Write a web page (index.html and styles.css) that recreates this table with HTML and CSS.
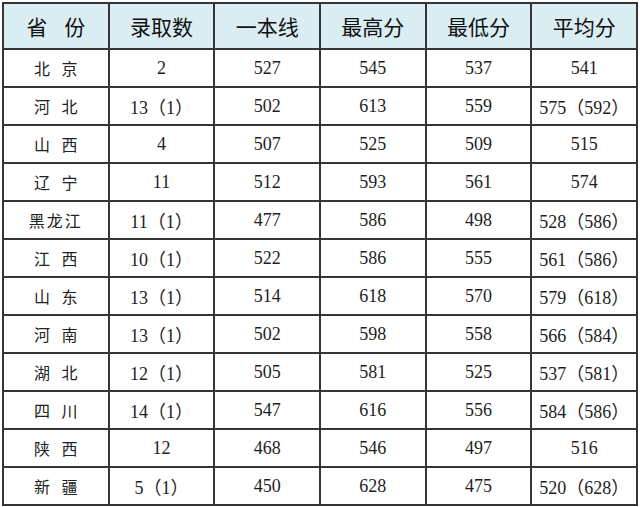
FILE: index.html
```html
<!DOCTYPE html>
<html lang="zh">
<head>
<meta charset="utf-8">
<link rel="stylesheet" href="styles.css">
</head>
<body>
<table class="tbl">
<thead>
<tr><th>省 份</th><th>录取数</th><th>一本线</th><th>最高分</th><th>最低分</th><th>平均分</th></tr>
</thead>
<tbody>
<tr><td class="prov">北 京</td><td>2</td><td>527</td><td>545</td><td>537</td><td>541</td></tr>
<tr><td class="prov">河 北</td><td>13（1）</td><td>502</td><td>613</td><td>559</td><td>575（592）</td></tr>
<tr><td class="prov">山 西</td><td>4</td><td>507</td><td>525</td><td>509</td><td>515</td></tr>
<tr><td class="prov">辽 宁</td><td>11</td><td>512</td><td>593</td><td>561</td><td>574</td></tr>
<tr><td class="prov three">黑龙江</td><td>11（1）</td><td>477</td><td>586</td><td>498</td><td>528（586）</td></tr>
<tr><td class="prov">江 西</td><td>10（1）</td><td>522</td><td>586</td><td>555</td><td>561（586）</td></tr>
<tr><td class="prov">山 东</td><td>13（1）</td><td>514</td><td>618</td><td>570</td><td>579（618）</td></tr>
<tr><td class="prov">河 南</td><td>13（1）</td><td>502</td><td>598</td><td>558</td><td>566（584）</td></tr>
<tr><td class="prov">湖 北</td><td>12（1）</td><td>505</td><td>581</td><td>525</td><td>537（581）</td></tr>
<tr><td class="prov">四 川</td><td>14（1）</td><td>547</td><td>616</td><td>556</td><td>584（586）</td></tr>
<tr><td class="prov">陕 西</td><td>12</td><td>468</td><td>546</td><td>497</td><td>516</td></tr>
<tr><td class="prov">新 疆</td><td>5（1）</td><td>450</td><td>628</td><td>475</td><td>520（628）</td></tr>
</tbody>
</table>
</body>
</html>
```
FILE: styles.css
```css
html, body {
  margin: 0;
  padding: 0;
  background: #ffffff;
}
.tbl {
  margin: 2px 0 0 2px;
  border-collapse: collapse;
  table-layout: fixed;
  width: 636px;
  font-family: "Liberation Serif", "Noto Sans CJK SC", serif;
  color: #1e1e1e;
}
.tbl th, .tbl td {
  border: 2px solid #353535;
  text-align: center;
  vertical-align: middle;
  padding: 0;
}
.tbl th {
  height: 44px;
  background: #d9edf3;
  font-family: "Noto Sans CJK SC", sans-serif;
  font-weight: 400;
  font-size: 21px;
  color: #111;
  word-spacing: 12px;
}
.tbl td {
  height: 36px;
  font-size: 18px;
}
.tbl td.prov {
  font-family: "Noto Sans CJK SC", sans-serif;
  font-size: 16px;
  font-weight: 400;
  color: #222;
  word-spacing: 8px;
}
.tbl td.prov.three {
  letter-spacing: 2px;
}
```
